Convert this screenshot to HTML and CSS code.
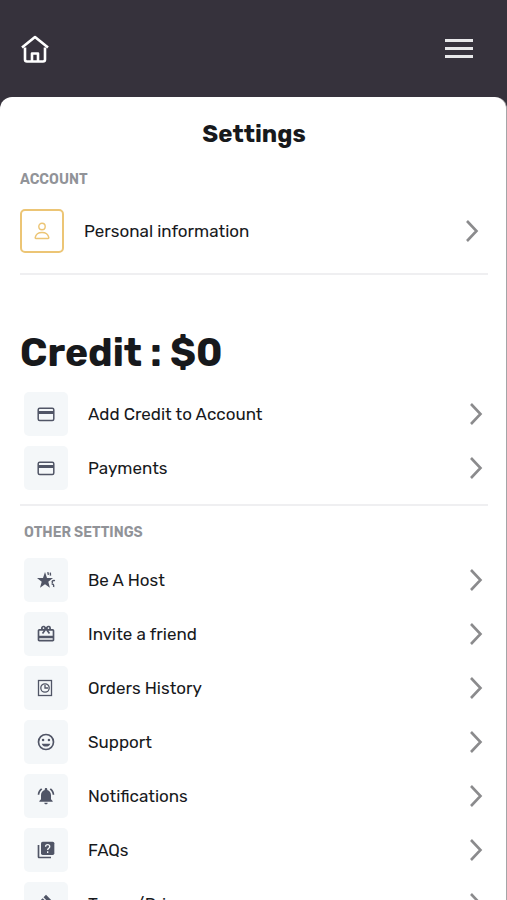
FILE: index.html
```html
<!DOCTYPE html>
<html lang="en">
<head>
    <meta charset="utf-8">
    <meta name="viewport" content="width=device-width, initial-scale=1">
    <title>Settings</title>
    <link rel="stylesheet" href="styles.css">
</head>
<body>
    <svg class="defs" aria-hidden="true">
        <symbol id="chevron" viewBox="0 0 14 24">
            <path d="M2 2l9.500 10L2 22" fill="none" stroke="currentColor" stroke-width="2.600"/>
        </symbol>
        <symbol id="card" viewBox="0 0 20 20">
            <rect x="2.200" y="4.200" width="15.600" height="12.200" rx="1.500" fill="none" stroke="currentColor" stroke-width="1.500"/>
            <path d="M2 7h16v3H2z"/>
        </symbol>
    </svg>

    <header class="topbar">
        <a class="home" href="#" aria-label="Home">
            <svg width="28" height="28" viewBox="0 0 28 28">
                <g fill="none" stroke="currentColor" stroke-width="2.600" stroke-linejoin="round">
                    <path d="M1 12.500L14 2l13 10.500"/>
                    <path d="M4 12.500V24.500a2 2 0 0 0 2 2h16a2 2 0 0 0 2-2V12.500"/>
                    <path d="M11 26.500v-8h6v8"/>
                </g>
            </svg>
        </a>
        <button class="menu" type="button" aria-label="Menu">
            <span></span>
            <span></span>
            <span></span>
        </button>
    </header>

    <main class="panel">
        <h1 class="title">Settings</h1>

        <section class="account">
            <h2 class="label">ACCOUNT</h2>
            <a class="row" href="#">
                <span class="icon icon-outline">
                    <svg width="18" height="18" viewBox="0 0 18 18">
                        <g fill="none" stroke="currentColor" stroke-width="1.400">
                            <circle cx="9" cy="4.500" r="3.200"/>
                            <path d="M2.900 16.500c-.6 0-.8-.4-.7-1C2.800 12.600 5.300 10.500 9 10.500s6.200 2.100 6.800 5c.1.6-.1 1-.7 1z"/>
                        </g>
                    </svg>
                </span>
                <span class="name">Personal information</span>
                <svg class="chevron"><use href="#chevron"/></svg>
            </a>
        </section>

        <section class="credit">
            <h2 class="amount">Credit : $0</h2>
            <div class="list">
                <a class="row" href="#">
                    <span class="icon"><svg width="20" height="20"><use href="#card"/></svg></span>
                    <span class="name">Add Credit to Account</span>
                    <svg class="chevron"><use href="#chevron"/></svg>
                </a>
                <a class="row" href="#">
                    <span class="icon"><svg width="20" height="20"><use href="#card"/></svg></span>
                    <span class="name">Payments</span>
                    <svg class="chevron"><use href="#chevron"/></svg>
                </a>
            </div>
        </section>

        <section class="other">
            <h2 class="label">OTHER SETTINGS</h2>
            <div class="list">
                <a class="row" href="#">
                    <span class="icon">
                        <svg width="20" height="20" viewBox="0 0 20 20">
                            <path d="M9 2l2 6 6 .1-4.700 3.700 1.600 5.900-4.900-3.400-5 3.400 1.700-5.900L1 8.100 7 8z"/>
                            <path d="M11.800 2.200l.6 2.600M14.300 2.600l.2 3M19 10.600c-2.400-.5-3.600.8-2.400 2.600M15.600 14c1.700-.2 2.400.9 2 3" fill="none" stroke="currentColor" stroke-width="1.400"/>
                        </svg>
                    </span>
                    <span class="name">Be A Host</span>
                    <svg class="chevron"><use href="#chevron"/></svg>
                </a>
                <a class="row" href="#">
                    <span class="icon">
                        <svg width="20" height="20" viewBox="0 0 24 24">
                            <path d="M20 6h-2.180c.11-.31.18-.65.18-1a2.996 2.996 0 0 0-5.500-1.650l-.5.670-.5-.680C10.960 2.540 10.050 2 9 2 7.340 2 6 3.340 6 5c0 .35.070.69.180 1H4c-1.110 0-1.990.89-1.990 2L2 19c0 1.110.89 2 2 2h16c1.110 0 2-.89 2-2V8c0-1.110-.89-2-2-2zm-5-2c.55 0 1 .45 1 1s-.45 1-1 1-1-.45-1-1 .45-1 1-1zM9 4c.55 0 1 .45 1 1s-.45 1-1 1-1-.45-1-1 .45-1 1-1zm11 15H4v-2h16v2zm0-5H4V8h5.080L7 10.830 8.620 12 12 7.400l3.380 4.600L17 10.830 14.920 8H20v6z"/>
                        </svg>
                    </span>
                    <span class="name">Invite a friend</span>
                    <svg class="chevron"><use href="#chevron"/></svg>
                </a>
                <a class="row" href="#">
                    <span class="icon">
                        <svg width="20" height="20" viewBox="0 0 20 20">
                            <g fill="none" stroke="currentColor" stroke-width="1.300">
                                <rect x="2.500" y="2.500" width="13" height="15"/>
                                <circle cx="9" cy="10" r="4.200"/>
                                <path d="M9 7v3h3"/>
                            </g>
                        </svg>
                    </span>
                    <span class="name">Orders History</span>
                    <svg class="chevron"><use href="#chevron"/></svg>
                </a>
                <a class="row" href="#">
                    <span class="icon">
                        <svg width="20" height="20" viewBox="0 0 24 24">
                            <circle cx="12" cy="12" r="9" fill="none" stroke="currentColor" stroke-width="2"/>
                            <circle cx="8.500" cy="9.500" r="1.500"/>
                            <circle cx="15.500" cy="9.500" r="1.500"/>
                            <path d="M6.800 14a5.600 5.600 0 0 0 10.400 0z"/>
                        </svg>
                    </span>
                    <span class="name">Support</span>
                    <svg class="chevron"><use href="#chevron"/></svg>
                </a>
                <a class="row" href="#">
                    <span class="icon">
                        <svg width="20" height="20" viewBox="0 0 24 24">
                            <path d="M7.580 4.080L6.150 2.650C3.750 4.480 2.170 7.300 2.030 10.500h2c.15-2.650 1.510-4.970 3.550-6.420zm12.390 6.420h2c-.15-3.200-1.730-6.020-4.120-7.850l-1.420 1.430c2.020 1.450 3.390 3.770 3.540 6.420zM18 11c0-3.070-1.640-5.640-4.500-6.320V4c0-.83-.67-1.500-1.500-1.500s-1.500.67-1.500 1.500v.68C7.630 5.360 6 7.920 6 11v5l-2 2v1h16v-1l-2-2v-5zm-6 11c1.100 0 2-.9 2-2h-4c0 1.100.9 2 2 2z"/>
                        </svg>
                    </span>
                    <span class="name">Notifications</span>
                    <svg class="chevron"><use href="#chevron"/></svg>
                </a>
                <a class="row" href="#">
                    <span class="icon">
                        <svg width="20" height="20" viewBox="0 0 24 24">
                            <path d="M4 6H2v14c0 1.100.9 2 2 2h14v-2H4V6z"/>
                            <rect x="6" y="2" width="16" height="16" rx="2"/>
                            <path d="M11.500 8c0-3.300 5-3.300 5 0 0 1.900-2.500 2-2.500 4M14 13.500v2" fill="none" stroke="#f4f7f9" stroke-width="1.600"/>
                        </svg>
                    </span>
                    <span class="name">FAQs</span>
                    <svg class="chevron"><use href="#chevron"/></svg>
                </a>
                <a class="row" href="#">
                    <span class="icon">
                        <svg width="20" height="20" viewBox="0 0 24 24">
                            <path d="M12 1l9 9-3 3-9-9zM8 5l9 9-4 4-9-9zM10 13l2 2-8 8-2-2z"/>
                        </svg>
                    </span>
                    <span class="name">Terms/Privacy</span>
                    <svg class="chevron"><use href="#chevron"/></svg>
                </a>
            </div>
        </section>
    </main>
</body>
</html>
```
FILE: styles.css
```css
* {
    box-sizing: border-box;
}

body {
    display: flex;
    flex-direction: column;
    height: 100vh;
    margin: 0;
    overflow: hidden;
    background-color: #36323c;
    color: #17191c;
    font-family: Rubik, Roboto, sans-serif;
}

h1, h2 {
    margin: 0;
}

.defs {
    display: none;
}

.topbar {
    display: flex;
    flex-shrink: 0;
    justify-content: space-between;
    align-items: center;
    height: 97px;
    padding: 0 34px 0 21px;
    color: #fff;
}

.home {
    display: flex;
    color: inherit;
}

.menu {
    display: flex;
    flex-direction: column;
    gap: 5px;
    width: 28px;
    padding: 0;
    border: none;
    background: none;
}

.menu span {
    height: 3px;
    background-color: #e8e8ea;
}

.panel {
    flex: 1;
    min-height: 0;
    overflow: hidden;
    padding: 20px 18px 0 20px;
    border-right: 1px solid #a5a5a7;
    border-radius: 12px 12px 0 0;
    background-color: #fff;
}

.title {
    font-size: 24px;
    line-height: 34px;
    text-align: center;
}

.label {
    color: #919398;
    font-size: 14px;
    font-weight: 600;
    line-height: 16px;
}

.account {
    padding: 21px 9px 20px 0;
    border-bottom: 2px solid #efeff1;
}

.account .row {
    margin-top: 21px;
}

.credit {
    padding: 53px 5px 14px 0;
    border-bottom: 2px solid #efeff1;
}

.amount {
    font-size: 39px;
    line-height: 50px;
}

.credit .list {
    margin-top: 14px;
    padding-left: 4px;
}

.other {
    padding: 19px 5px 0 4px;
}

.other .list {
    margin-top: 17px;
}

.list {
    display: flex;
    flex-direction: column;
    gap: 10px;
}

.row {
    display: flex;
    align-items: center;
    gap: 20px;
    color: inherit;
    font-size: 17px;
    line-height: 24px;
    text-decoration: none;
}

.name {
    flex: 1;
}

.icon {
    display: flex;
    justify-content: center;
    align-items: center;
    width: 44px;
    height: 44px;
    border-radius: 5px;
    background-color: #f4f7f9;
    color: #505566;
}

.icon svg {
    fill: currentColor;
}

.icon-outline {
    border: 2px solid #ecc575;
    background-color: #fff;
    color: #ecc575;
}

.chevron {
    width: 14px;
    height: 24px;
    color: #8b8b8d;
}
```
